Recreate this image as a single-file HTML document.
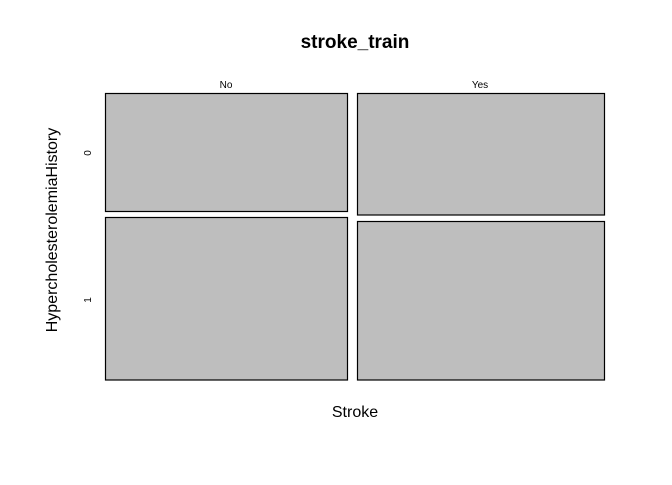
<!DOCTYPE html>
<html><head><style>body{margin:0;background:#fff}</style></head><body>
<svg width="672" height="480" xmlns="http://www.w3.org/2000/svg" font-family="Liberation Sans, sans-serif">
<rect width="672" height="480" fill="#fff"/>
<text x="355" y="48" font-size="19" font-weight="bold" text-anchor="middle">stroke_train</text>
<text x="226" y="88" font-size="10" text-anchor="middle">No</text>
<text x="480" y="88" font-size="10" text-anchor="middle">Yes</text>
<g fill="#bebebe" stroke="#000" stroke-width="1.2">
<rect x="105.5" y="93.5" width="242" height="118"/>
<rect x="105.5" y="217.5" width="242" height="162.5"/>
<rect x="357.5" y="93.5" width="247" height="121.5"/>
<rect x="357.5" y="221.5" width="247" height="158.5"/>
</g>
<text font-size="10" text-anchor="middle" transform="translate(91,153) rotate(-90)">0</text>
<text font-size="10" text-anchor="middle" transform="translate(91,300) rotate(-90)">1</text>
<text font-size="16" text-anchor="middle" transform="translate(57,230) rotate(-90)">HypercholesterolemiaHistory</text>
<text x="355" y="417" font-size="16" text-anchor="middle">Stroke</text>
</svg>
</body></html>
